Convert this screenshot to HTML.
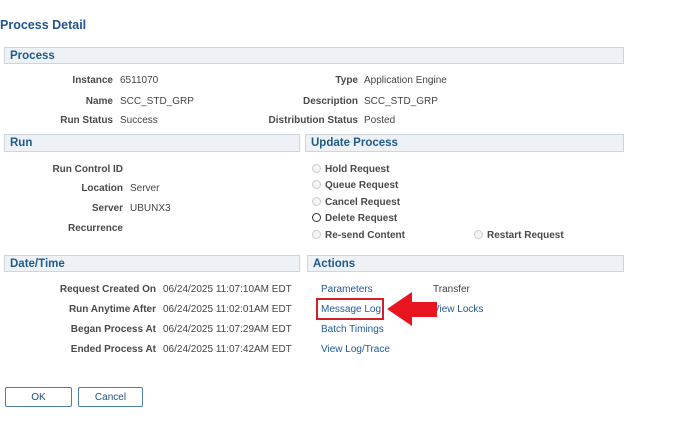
<html><head><style>
body{margin:0;width:680px;height:425px;background:#fff;font-family:"Liberation Sans",Arial,sans-serif;position:relative;overflow:hidden}
.a{position:absolute;white-space:nowrap;font-size:10px;color:#444;line-height:12px;transform:translateY(-5px)}
.l{font-weight:bold;color:#4a4a4a;text-align:right}
.h{position:absolute;background:#eef2f6;border:1px solid #cdd5dd;box-sizing:border-box;font-weight:bold;font-size:11.5px;color:#1f5a8c;padding-left:5px;line-height:16px}
.lk{color:#1f5a9a}
.r{position:absolute;width:9px;height:9px;border-radius:50%;border:1px solid #ccc;box-sizing:border-box;background:#f4f4f4}
.b{position:absolute;border:1px solid #4a7fb0;border-radius:2px;box-sizing:border-box;font-size:10px;color:#1f4f80;text-align:center;line-height:19px}
</style></head><body>
<div class="a" style="left:0;top:25px;font-size:12.5px;font-weight:bold;color:#23558a;line-height:15px;transform:translateY(-7px)">Process Detail</div>
<div class="h" style="left:4px;top:47px;width:620px;height:17px">Process</div>
<div class="a l" style="right:567px;top:80px">Instance</div><div class="a" style="left:120px;top:80px">6511070</div>
<div class="a l" style="right:567px;top:101px">Name</div><div class="a" style="left:120px;top:101px">SCC_STD_GRP</div>
<div class="a l" style="right:567px;top:120px">Run Status</div><div class="a" style="left:120px;top:120px">Success</div>
<div class="a l" style="right:322px;top:80px">Type</div><div class="a" style="left:364px;top:80px">Application Engine</div>
<div class="a l" style="right:322px;top:101px">Description</div><div class="a" style="left:364px;top:101px">SCC_STD_GRP</div>
<div class="a l" style="right:322px;top:120px">Distribution Status</div><div class="a" style="left:364px;top:120px">Posted</div>
<div class="h" style="left:4px;top:134px;width:296px;height:18px">Run</div>
<div class="h" style="left:305px;top:134px;width:319px;height:18px">Update Process</div>
<div class="a l" style="right:557px;top:169px">Run Control ID</div>
<div class="a l" style="right:557px;top:188px">Location</div><div class="a" style="left:130px;top:188px">Server</div>
<div class="a l" style="right:557px;top:208px">Server</div><div class="a" style="left:130px;top:208px">UBUNX3</div>
<div class="a l" style="right:557px;top:228px">Recurrence</div>
<div class="r" style="left:312px;top:164px"></div><div class="a l" style="left:325px;top:169px">Hold Request</div>
<div class="r" style="left:312px;top:180px"></div><div class="a l" style="left:325px;top:185px">Queue Request</div>
<div class="r" style="left:312px;top:197px"></div><div class="a l" style="left:325px;top:202px">Cancel Request</div>
<div class="r" style="left:312px;top:213px;border-color:#333;background:#fff"></div><div class="a l" style="left:325px;top:218px">Delete Request</div>
<div class="r" style="left:312px;top:230px"></div><div class="a l" style="left:325px;top:235px">Re-send Content</div>
<div class="r" style="left:474px;top:230px"></div><div class="a l" style="left:487px;top:235px">Restart Request</div>
<div class="h" style="left:4px;top:255px;width:296px;height:17px">Date/Time</div>
<div class="h" style="left:307px;top:255px;width:317px;height:17px">Actions</div>
<div class="a l" style="right:524px;top:289px">Request Created On</div><div class="a" style="left:163px;top:289px">06/24/2025 11:07:10AM EDT</div>
<div class="a l" style="right:524px;top:309px">Run Anytime After</div><div class="a" style="left:163px;top:309px">06/24/2025 11:02:01AM EDT</div>
<div class="a l" style="right:524px;top:329px">Began Process At</div><div class="a" style="left:163px;top:329px">06/24/2025 11:07:29AM EDT</div>
<div class="a l" style="right:524px;top:349px">Ended Process At</div><div class="a" style="left:163px;top:349px">06/24/2025 11:07:42AM EDT</div>
<div class="a lk" style="left:321px;top:289px">Parameters</div><div class="a" style="left:433px;top:289px">Transfer</div>
<div class="a lk" style="left:321px;top:309px">Message Log</div><div class="a lk" style="left:433px;top:309px">View Locks</div>
<div class="a lk" style="left:321px;top:329px">Batch Timings</div>
<div class="a lk" style="left:321px;top:349px">View Log/Trace</div>
<div style="position:absolute;left:316px;top:298px;width:68px;height:22px;border:2px solid #d0202a;box-sizing:border-box"></div>
<svg style="position:absolute;left:0;top:0" width="680" height="425"><polygon points="387,309 412,292 412,302 437,302 437,317 412,317 412,326" fill="#e8141f"/></svg>
<div class="b" style="left:5px;top:387px;width:67px;height:20px">OK</div>
<div class="b" style="left:78px;top:387px;width:65px;height:20px">Cancel</div>
</body></html>
